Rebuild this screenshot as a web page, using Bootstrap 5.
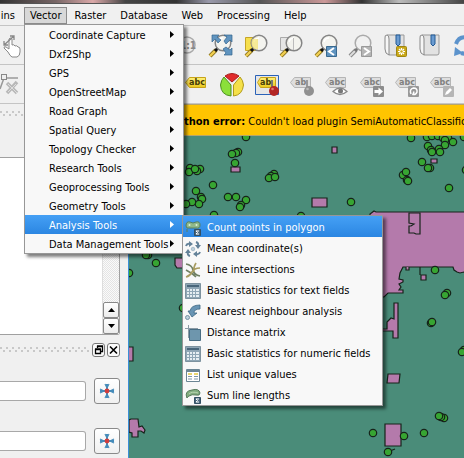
<!DOCTYPE html>
<html lang="en">
<head>
<meta charset="utf-8">
<meta name="viewport" content="width=device-width, initial-scale=1">
<title>Vector menu</title>
<link href="https://cdn.jsdelivr.net/npm/bootstrap@5.3.0/dist/css/bootstrap.min.css" rel="stylesheet">
<style>
body{font:11px/18px "DejaVu Sans Condensed","Noto Sans",sans-serif;color:#000;background:#f0f0f0}
button,input{font:inherit;color:inherit}
svg{display:block}
.title-strip{height:4px;background:linear-gradient(90deg,#333,#766 12%,#dba9a9 20%,#444 27%,#333 38%,#99a 45%,#555 56%,#c99 70%,#333 78%,#bbb 86%,#444);border-bottom:1px solid #555}
.main-menu{height:22px;border-bottom:1px solid #c4c4c4;padding-top:3px}
.top-item{height:17px;line-height:16px;padding:0 6px;border:1px solid transparent;background:none}
.top-item.open{border-color:#8c8c8c;background:#d8d8d8;padding:0 5px}
.first-item{width:24px;padding:0 8px 0 0}
.tool-row{height:39px;border-bottom:1px solid #c4c4c4;padding-top:2px}
.tool-btn{width:35px;padding:0;border:0;background:none}
.tool-btn svg,.first-tool svg{width:24px;height:24px;overflow:visible}
.first-tool{width:24px;padding:0;border:0;background:none}
.skip-a{width:149px}.skip-b{width:161px}
.dock{width:129px;border-right:1px solid #3a8fd8}
.hatch{height:6px;background:radial-gradient(circle at 1px 1px,#c8c8c8 1px,transparent 1px) 0 0/6px 6px,radial-gradient(circle at 4px 4px,#c8c8c8 1px,transparent 1px) 0 0/6px 6px}
.dock-head{height:53px;padding-top:7px}
.tree{height:178px;margin-right:8px;border:1px solid #a0a0a0;border-left:0;border-radius:0 0 3px 0;background:#fff}
.scroller{width:17px;background:repeating-conic-gradient(#e4e4e4 0 25%,#fafafa 0 50%) 0 0/2px 2px;border-left:1px solid #ddd}
.scroller button{width:16px;height:16px;padding:0;border:1px solid #888;border-radius:2px;background:linear-gradient(#fff,#ececec)}
.dock-title{height:30px;gap:2px;padding:0 8px 0 0}
.title-btn{width:13px;height:14px;padding:0;border:1px solid #777;border-radius:3px;background:#fbfbfb}
.field-row{height:26px;margin-bottom:24px;padding-right:8px}
.field-row input{height:20px;min-width:0;border:1px solid #a8a8a8;border-left:0;border-radius:0 3px 3px 0;background:#fff}
.pick-btn{width:26px;height:26px;padding:0;border:1px solid #8a8a8a;border-radius:3px;background:linear-gradient(#fff,#f0f0f0)}
.fields{padding-top:13px}
.message{height:32px;background:#ffc400;border:1px solid #b7a56a;border-width:1px 0;padding:3px 0 0 41px}
.canvas-area{background:#4a8c79;min-height:0}
.pop{position:absolute;background:#f8f8f8;border:1px solid #979797;box-shadow:3px 3px 3px rgba(0,0,0,.5)}
.pop button{border:0;background:none;text-align:left;white-space:nowrap}
.pop button.hot{background:linear-gradient(#45a0f5,#2b86e2);color:#fff}
.vector-pop{left:24px;top:24px;width:160px;z-index:1}
.vector-pop button{height:19px;padding:2px 9px 0 24px}
.analysis-pop{left:182px;top:215px;width:201px;z-index:2}
.analysis-pop button{height:21px;padding:2px 0 0 2px;gap:6px}
.analysis-pop svg{width:16px;height:16px}
.vector-pop svg{width:4px;height:7px;margin-bottom:3px}
</style>
</head>
<body>
<svg width="0" height="0" class="position-absolute" aria-hidden="true">
<defs>
<linearGradient id="tagfill" x2="0" y2="1"><stop offset="0" stop-color="#fff27c"/><stop offset="1" stop-color="#eac81c"/></linearGradient>
<g id="lens"><path d="M2 22l6-6" stroke="#8b7420" stroke-width="4"/><path d="M2 22l5-5" stroke="#f2cf52" stroke-width="2.4"/><path d="M7 17l3-3" stroke="#111" stroke-width="3"/><circle cx="15" cy="9" r="7.8" fill="#f4f4ee" fill-opacity=".82" stroke="#858585" stroke-width="1.5"/><path d="M10 8q1-4 5-4" stroke="#fff" stroke-width="1.5" fill="none"/></g>
<g id="lensgray"><path d="M2 22l6-6" stroke="#888" stroke-width="4"/><path d="M2 22l5-5" stroke="#ddd" stroke-width="2"/><path d="M7 17l3-3" stroke="#777" stroke-width="3"/><circle cx="15" cy="9" r="7.8" fill="#f1f1f1" stroke="#aaa" stroke-width="1.5"/></g>
<g id="graytag"><path d="M.5 9.500l4-5h16v10h-16z" fill="#dedede" stroke="#b5b5b5"/><text x="4" y="12" font-family="DejaVu Sans" font-size="8" font-weight="700" fill="#808080">abc</text></g>
<g id="book"><path d="M3 1h17v18q0 2-2 2H5L3 17z" fill="#e2e2e2" stroke="#999"/><path d="M3 1Q.5 1 1 4v11q0 5 4 6V5Q5 1 3 1z" fill="#f6f6f6" stroke="#888"/><path d="M12 1h4v9l-2 2-2-2z" fill="#6b9bd0" stroke="#235a95"/></g>
<g id="calc"><path d="M.5 .5h15v15H.5z" fill="#8fa6b5" stroke="#7d929f"/><path d="M2 2h12v2H2z" fill="#49667a"/><path d="M2 6h2v2H2zM5 6h2v2H5zM8 6h2v2H8zM11 6h3v2h-3zM2 9h2v2H2zM5 9h2v2H5zM8 9h2v2H8zM11 9h3v2h-3zM2 12h2v2H2zM5 12h2v2H5zM8 12h2v2H8zM11 12h3v2h-3z" fill="#e6eef2"/></g>
<g id="sigma"><path d="M9.500 9.500h6v6h-6z" fill="#49667c" stroke="#334f63"/><path d="M14 11h-3l1.500 1.500L11 14h3" fill="none" stroke="#fff"/></g>
<g id="cross"><path d="M12 5v14M5 12h14" stroke="#468cba" stroke-width="2"/><path d="M10 5l2 4 2-4M10 19l2-4 2 4M5 10l4 2-4 2M19 10l-4 2 4 2" fill="none" stroke="#468cba" stroke-width="1.200"/><circle cx="12" cy="12" r="2.400" fill="#d13c3c"/></g>
<path id="arrow" d="M0 0l4 3.500L0 7z"/>
</defs>
</svg>

<div class="d-flex flex-column vh-100 overflow-hidden position-relative">
<div class="title-strip flex-shrink-0"></div>
<nav class="main-menu d-flex flex-shrink-0" aria-label="Main menu">
<button class="top-item first-item d-flex justify-content-end overflow-hidden">Plugins</button>
<button class="top-item open">Vector</button>
<button class="top-item">Raster</button>
<button class="top-item">Database</button>
<button class="top-item">Web</button>
<button class="top-item">Processing</button>
<button class="top-item">Help</button>
</nav>

<div class="tool-row d-flex align-items-center flex-shrink-0">
<button class="first-tool flex-shrink-0" aria-label="Touch zoom"><svg viewBox="0 0 24 24"><path d="M8 18l-4-4q0-2 2-1l3 2V5q1-2 3 0v6q2-1 3 1 2-1 3 1 2 0 2 2v3q0 4-3 5h-5q-2-1-4-5z" fill="#fff" stroke="#888"/><path d="M4 11L14 2M4 7v4h4M10 2h4v4" fill="none" stroke="#888" stroke-width="1.300"/></svg></button>
<div class="skip-a flex-shrink-0"></div>
<button class="tool-btn flex-shrink-0" aria-label="Native resolution"><svg viewBox="0 0 24 24"><circle cx="14" cy="11" r="8" fill="#eee" stroke="#aaa" stroke-width="1.500"/><text x="7" y="15" font-family="DejaVu Sans Condensed" font-size="10" font-weight="700" fill="#888">1:1</text></svg></button>
<button class="tool-btn flex-shrink-0" aria-label="Zoom full"><svg viewBox="0 0 24 24"><use href="#lens"/><path d="M4 1h7L9 3l4 3-3 3-3-4-3 3zM24 1v7l-2-2-4 4-2-3 3-4-3-2zM24 21h-8l2-2-3-4 3-2 4 3 2-2z" fill="#6094bf" stroke="#34648e" stroke-width=".7"/></svg></button>
<button class="tool-btn flex-shrink-0" aria-label="Zoom to selection"><svg viewBox="0 0 24 24"><path d="M2.500 3.500h12v13h-12z" fill="#f6df4d" stroke="#c6a527"/><use href="#lens" x="1"/><path d="M9 5h6v10h-4q-4-4-2-10z" fill="#f6e77d" opacity=".7"/></svg></button>
<button class="tool-btn flex-shrink-0" aria-label="Zoom to layer"><svg viewBox="0 0 24 24"><path d="M2.500 3.500h13v13h-13z" fill="#e5e5e5" stroke="#aaa"/><use href="#lens" x="1"/><path d="M15.500 4v12" stroke="#bbb"/></svg></button>
<button class="tool-btn flex-shrink-0" aria-label="Zoom last"><svg viewBox="0 0 24 24"><use href="#lens" x="1"/><path d="M13.500 12.500h10v10h-10z" fill="#5f93bf" stroke="#39698f"/><path d="M21 14l-5 3.500 5 3.500" fill="none" stroke="#fff" stroke-width="2"/></svg></button>
<button class="tool-btn flex-shrink-0" aria-label="Zoom next"><svg viewBox="0 0 24 24"><use href="#lensgray"/><path d="M13.500 12.500h10v10h-10z" fill="#b5b5b5" stroke="#999"/><path d="M16 14l5 3.500-5 3.500" fill="none" stroke="#fff" stroke-width="2"/></svg></button>
<button class="tool-btn flex-shrink-0" aria-label="New bookmark"><svg viewBox="0 0 24 24"><use href="#book" x="1"/><rect x="13.500" y="12.500" width="10" height="10" rx="1" fill="#c9a817" stroke="#9f8512"/><path d="M18.500 14v7M15 17.500h7M16 15l5 5M21 15l-5 5" stroke="#fff" stroke-width="1.200"/><circle cx="18.500" cy="17.500" r="1.300" fill="#c9a817"/></svg></button>
<button class="tool-btn flex-shrink-0" aria-label="Show bookmarks"><svg viewBox="0 0 24 24"><use href="#book" x="1"/></svg></button>
<button class="tool-btn flex-shrink-0" aria-label="Refresh"><svg viewBox="0 0 24 24"><path d="M3 10Q6 1 16 4M21 13q-3 9-13 6" fill="none" stroke="#5c93cc" stroke-width="4"/><path d="M1 22l1-9 8 6zM22 2v9l-8-5z" fill="#5c93cc"/></svg></button>
</div>

<div class="tool-row d-flex align-items-center flex-shrink-0">
<button class="first-tool flex-shrink-0" aria-label="Node tool"><svg viewBox="0 0 24 24"><path d="M0 16L4 5h14" fill="none" stroke="#999" stroke-width="1.500"/><rect x="1.500" y="1.500" width="5" height="5" fill="#eee" stroke="#888"/><path d="M7 20L17 9M7 10l10 10" stroke="#b8b8b8" stroke-width="3.500"/><path d="M8 19l8-8M8 11l9 9" stroke="#ddd"/></svg></button>
<div class="skip-b flex-shrink-0"></div>
<button class="tool-btn flex-shrink-0" aria-label="Layer labeling"><svg viewBox="0 0 24 24"><path d="M.5 9.500l4-5h16v10h-16z" fill="url(#tagfill)" stroke="#c6a31a"/><text x="4" y="12" font-family="DejaVu Sans" font-size="8" font-weight="700" fill="#443c08">abc</text></svg></button>
<button class="tool-btn flex-shrink-0" aria-label="Diagrams"><svg viewBox="0 0 24 24"><path d="M12 9L5 3q7-5 14 0z" fill="#e12b2b" stroke="#a51b1b"/><path d="M11 12v11Q1 22 .5 12 1 7 4 4z" fill="#8be03a" stroke="#4c8f20"/><path d="M13.500 12v11q9-1 10-11-.5-5-3.500-8z" fill="#f5e049" stroke="#b09a1a"/></svg></button>
<button class="tool-btn flex-shrink-0" aria-label="Highlight pinned labels"><svg viewBox="0 0 24 24"><path d="M.5 2.500h23v19H.5z" fill="#e6e6e6" stroke="#2a62b8"/><path d="M2.500 9.500l3-5h15v10h-15z" fill="url(#tagfill)" stroke="#c6a31a"/><text x="5" y="12" font-family="DejaVu Sans" font-size="8" font-weight="700" fill="#443c08">ab</text><path d="M17 7v7" stroke="#777" stroke-width="2"/><circle cx="19" cy="18" r="5" fill="#b32624"/><circle cx="17.500" cy="16" r="1.300" fill="#de7775"/></svg></button>
<button class="tool-btn flex-shrink-0" aria-label="Pin labels"><svg viewBox="0 0 24 24"><path d="M.5 9.500l4-5h16v10h-16z" fill="#dedede" stroke="#b5b5b5"/><text x="5" y="12" font-family="DejaVu Sans" font-size="8" font-weight="700" fill="#808080">ab</text><path d="M17 7v7" stroke="#999" stroke-width="2"/><circle cx="19" cy="18" r="5" fill="#909090"/><circle cx="17.500" cy="16" r="1.300" fill="#bbb"/></svg></button>
<button class="tool-btn flex-shrink-0" aria-label="Show or hide labels"><svg viewBox="0 0 24 24"><use href="#graytag"/><path d="M8 18.500q7-7 14 0-7 6-14 0z" fill="#fff" stroke="#888" stroke-width="1.300"/><circle cx="15.500" cy="18" r="2.500" fill="#777"/></svg></button>
<button class="tool-btn flex-shrink-0" aria-label="Move label"><svg viewBox="0 0 24 24"><use href="#graytag"/><rect x="13" y="13" width="11" height="11" rx="1" fill="#8c8c8c"/><path d="M14.500 17h4v-2.500l4.500 4-4.500 4V20h-4z" fill="#fff"/></svg></button>
<button class="tool-btn flex-shrink-0" aria-label="Rotate label"><svg viewBox="0 0 24 24"><use href="#graytag"/><rect x="13" y="13" width="11" height="11" rx="1" fill="#999"/><path d="M16 21q-2-5 2.500-6 4 0 3.500 4-1 3-4 2.500l1-3" fill="none" stroke="#fff" stroke-width="1.500"/></svg></button>
<button class="tool-btn flex-shrink-0" aria-label="Change label"><svg viewBox="0 0 24 24"><use href="#graytag"/><rect x="13" y="13" width="11" height="11" rx="1" fill="#b5b5b5"/><path d="M15 22l1-3 4-4 2 2-4 4z" fill="#fff"/></svg></button>
</div>

<div class="d-flex flex-grow-1 overflow-hidden">
<aside class="dock flex-shrink-0 d-flex flex-column">
<div class="dock-head flex-shrink-0"><div class="hatch"></div></div>
<div class="tree flex-shrink-0 d-flex justify-content-end">
<div class="scroller d-flex flex-column justify-content-end">
<button aria-label="Scroll up"><svg class="mx-auto" width="7" height="4"><path d="M0 4l3.500-4L7 4z"/></svg></button>
<button aria-label="Scroll down"><svg class="mx-auto" width="7" height="4"><path d="M0 0l3.500 4L7 0z"/></svg></button>
</div>
</div>
<div class="dock-title flex-shrink-0 d-flex align-items-center">
<div class="hatch flex-grow-1"></div>
<button class="title-btn" aria-label="Float panel"><svg width="11" height="12"><path d="M4.500 4V2.500h5v5H8M4 2h6M2.500 5.500h5v4h-5zM2 5h6" fill="none" stroke="#000" stroke-width="1.300"/></svg></button>
<button class="title-btn" aria-label="Close panel"><svg width="11" height="12"><path d="M2 2.500l7 7M9 2.500l-7 7" stroke="#000" stroke-width="1.600"/></svg></button>
</div>
<div class="fields">
<div class="field-row d-flex align-items-center gap-2"><input type="text" class="flex-grow-1 w-50" aria-label="Start point"><button class="pick-btn flex-shrink-0" aria-label="Pick start point"><svg width="24" height="24"><use href="#cross"/></svg></button></div>
<div class="field-row d-flex align-items-center gap-2"><input type="text" class="flex-grow-1 w-50" aria-label="Stop point"><button class="pick-btn flex-shrink-0" aria-label="Pick stop point"><svg width="24" height="24"><use href="#cross"/></svg></button></div>
</div>
</aside>
<main class="flex-grow-1 d-flex flex-column overflow-hidden">
<div class="message d-flex align-items-center flex-shrink-0 text-nowrap" role="alert"><strong>Python error:</strong>&nbsp;Couldn't load plugin SemiAutomaticClassification</div>
<div class="canvas-area flex-grow-1">
<svg width="100%" height="100%" role="img" aria-label="Map">
<g transform="translate(-129 -136)" stroke="#16231a" stroke-width="1.200">
<g fill="#b47aab">
<path d="M231 167h9v5h-9zM312 198h15v9h-15zM332 147h5v6h-5zM431 159h6v4h-6zM175 258h9v10h-7l-2-3zM128 347h5v14h-5zM129 420l2-1h7l1 8 3-1 3 4-1 3-3-2h-3v6h-6v-4l-3-1z"/>
<path d="M370 217v-3l4-3 2 1h92v62l-4-2-4 1-3-1-3-2-1-3h-50l-3 6-1 6 4 1v2l-4 2 2 3-2 3h4v3h-15l-4 4h-14z"/>
<path d="M409 213v10l5 1-3 2h-2v7h5l2 1h4v-21zM406 267v3h3v-3M420 267v8M421 275h5v5h-5z"/>
<path d="M394 303h4v35h-5v-7h-12v-2h6v-7l4-4 3 1zM388 374h12l-1 9h-12zM385 424h16v22h-16z"/>
<path d="M390 451l5-2"/>
</g>
<g id="points" fill="#37a532"></g>
</g>
</svg>
</div>
</main>
</div>

<div class="pop vector-pop d-flex flex-column" role="menu">
<button role="menuitem" class="d-flex align-items-center justify-content-between">Coordinate Capture<svg><use href="#arrow"/></svg></button>
<button role="menuitem" class="d-flex align-items-center justify-content-between">Dxf2Shp<svg><use href="#arrow"/></svg></button>
<button role="menuitem" class="d-flex align-items-center justify-content-between">GPS<svg><use href="#arrow"/></svg></button>
<button role="menuitem" class="d-flex align-items-center justify-content-between">OpenStreetMap<svg><use href="#arrow"/></svg></button>
<button role="menuitem" class="d-flex align-items-center justify-content-between">Road Graph<svg><use href="#arrow"/></svg></button>
<button role="menuitem" class="d-flex align-items-center justify-content-between">Spatial Query<svg><use href="#arrow"/></svg></button>
<button role="menuitem" class="d-flex align-items-center justify-content-between">Topology Checker<svg><use href="#arrow"/></svg></button>
<button role="menuitem" class="d-flex align-items-center justify-content-between">Research Tools<svg><use href="#arrow"/></svg></button>
<button role="menuitem" class="d-flex align-items-center justify-content-between">Geoprocessing Tools<svg><use href="#arrow"/></svg></button>
<button role="menuitem" class="d-flex align-items-center justify-content-between">Geometry Tools<svg><use href="#arrow"/></svg></button>
<button role="menuitem" class="hot d-flex align-items-center justify-content-between">Analysis Tools<svg fill="#fff"><use href="#arrow"/></svg></button>
<button role="menuitem" class="d-flex align-items-center justify-content-between">Data Management Tools<svg><use href="#arrow"/></svg></button>
</div>

<div class="pop analysis-pop d-flex flex-column" role="menu">
<button role="menuitem" class="hot d-flex align-items-center"><svg viewBox="0 0 16 16"><path d="M1 6q0-5 4-4 3 2 6 0 4-1 4 3t-4 3H5q-4 1-4-2z" fill="#8fb98a" stroke="#587f5c"/><path d="M2 9v3" stroke="#587f5c"/><circle cx="4.500" cy="5" r="1" fill="#dff0d5"/><circle cx="11.500" cy="5" r="1" fill="#dff0d5"/><use href="#sigma"/></svg>Count points in polygon</button>
<button role="menuitem" class="d-flex align-items-center"><svg viewBox="0 0 16 16"><g fill="none" stroke="#648299" stroke-width="2"><path d="M1 5q1-3 4-2M11 1q3 1 2 4M15 11q-1 3-4 2M5 15q-3-1-2-4"/></g><path d="M4 0l4 3-4 3zM10 4l3 4 3-4zM12 10l-4 3 4 3zM0 12l3-4 3 4z" fill="#648299"/><circle cx="8" cy="8" r="1.800" fill="#bcd0dc" stroke="#8ba5b6" stroke-width=".6"/></svg>Mean coordinate(s)</button>
<button role="menuitem" class="d-flex align-items-center"><svg viewBox="0 0 16 16"><path d="M1 2q6 1 7 6t7 6M1 8q6 3 10 7" fill="none" stroke="#6f7f62" stroke-width="1.700"/><path d="M15 6q-6 0-8 4t-6 5M11 1Q8 6 9 10" fill="none" stroke="#a89c60" stroke-width="1.700"/></svg>Line intersections</button>
<button role="menuitem" class="d-flex align-items-center"><svg viewBox="0 0 16 16"><use href="#calc"/></svg>Basic statistics for text fields</button>
<button role="menuitem" class="d-flex align-items-center"><svg viewBox="0 0 16 16"><path d="M15 1v4q-6 0-6 4h3l-5 4-4-6h2q1-6 10-6z" fill="#6995b4" stroke="#3d6783" stroke-width=".8"/><circle cx="2.500" cy="13.500" r="2" fill="#bed1dc" stroke="#7592a4"/></svg>Nearest neighbour analysis</button>
<button role="menuitem" class="d-flex align-items-center"><svg viewBox="0 0 16 16"><path d="M4.500 4.500h11v11h-11z" fill="#6e96ad" stroke="#486d83"/><path d="M3.500 0v13M0 3.500h13" stroke="#8c9ba5"/></svg>Distance matrix</button>
<button role="menuitem" class="d-flex align-items-center"><svg viewBox="0 0 16 16"><use href="#calc"/></svg>Basic statistics for numeric fields</button>
<button role="menuitem" class="d-flex align-items-center"><svg viewBox="0 0 16 16"><path d="M1.500 2.500h13v12h-13z" fill="#fff" stroke="#6b8594"/><path d="M2 4h12" stroke="#6b8594" stroke-width="2"/><path d="M3 7h4M9 7h4" stroke="#e4ca42" stroke-width="1.500"/><path d="M3 9.500h4M9 9.500h4M3 12h4M9 12h4" stroke="#7f97a5"/></svg>List unique values</button>
<button role="menuitem" class="d-flex align-items-center"><svg viewBox="0 0 16 16"><path d="M2 10Q-1 3 7 2q7-2 8 3 0 3-4 2T4 8q-2 1-2 2z" fill="#83ad80" stroke="#55795a"/><path d="M4 6q3-3 9-1" fill="none" stroke="#b9d4b2"/><use href="#sigma"/></svg>Sum line lengths</button>
</div>
</div>

<script>
const points = [[246,137],[411,138],[238,152],[236,153],[232,154],[235,163],[190,168],[200,169],[197,171],[189,172],[195,169],[274,174],[271,176],[269,178],[275,177],[213,185],[196,191],[201,197],[202,199],[199,204],[192,202],[186,204],[228,197],[236,197],[246,200],[241,205],[240,207],[214,215],[301,216],[351,202],[427,137],[432,136],[438,136],[443,138],[448,138],[453,142],[445,140],[445,145],[428,146],[431,150],[432,152],[439,149],[440,152],[422,162],[430,168],[428,168],[403,175],[406,172],[407,180],[408,181],[449,188],[464,137],[466,170],[435,270],[447,293],[445,295],[431,323],[432,322],[464,350],[462,352],[444,418],[441,417],[439,416],[373,433],[404,436],[424,433],[388,452],[148,255],[146,255],[156,263],[129,273],[183,308]];
const layer = document.getElementById("points");
for (const [x, y] of points) {
  const c = document.createElementNS("http://www.w3.org/2000/svg", "circle");
  c.setAttribute("cx", x); c.setAttribute("cy", y); c.setAttribute("r", 3.7);
  layer.append(c);
}
</script>
<script src="https://cdn.jsdelivr.net/npm/bootstrap@5.3.0/dist/js/bootstrap.bundle.min.js"></script>
</body>
</html>
